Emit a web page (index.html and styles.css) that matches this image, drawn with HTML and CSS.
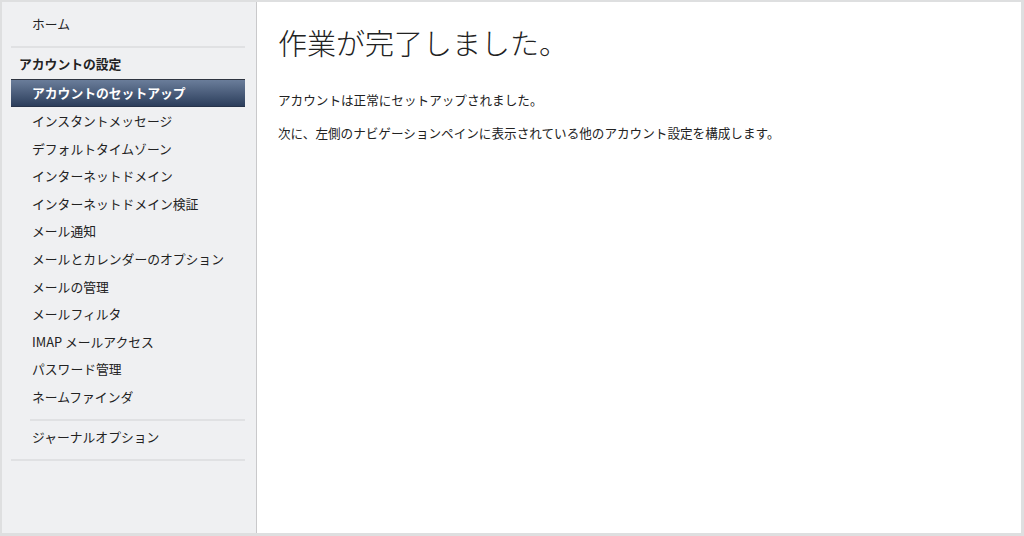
FILE: index.html
```html
<!DOCTYPE html>
<html lang="ja">
<head>
    <meta charset="UTF-8">
    <meta name="viewport" content="width=device-width, initial-scale=1.0">
    <title>アカウントのセットアップ</title>
    <link rel="stylesheet" href="styles.css">
</head>
<body>
    <div class="frame">
        <nav class="sidebar">
            <div class="nav-item">ホーム</div>
            <div class="sep"></div>
            <div class="nav-heading">アカウントの設定</div>
            <div class="nav-item selected">アカウントのセットアップ</div>
            <div class="nav-item">インスタントメッセージ</div>
            <div class="nav-item">デフォルトタイムゾーン</div>
            <div class="nav-item">インターネットドメイン</div>
            <div class="nav-item">インターネットドメイン検証</div>
            <div class="nav-item">メール通知</div>
            <div class="nav-item">メールとカレンダーのオプション</div>
            <div class="nav-item">メールの管理</div>
            <div class="nav-item">メールフィルタ</div>
            <div class="nav-item">IMAP メールアクセス</div>
            <div class="nav-item">パスワード管理</div>
            <div class="nav-item">ネームファインダ</div>
            <div class="sep sep-inset"></div>
            <div class="nav-item journal">ジャーナルオプション</div>
            <div class="sep"></div>
        </nav>
        <main class="content">
            <h1>作業が完了しました。</h1>
            <p>アカウントは正常にセットアップされました。</p>
            <p>次に、左側のナビゲーションペインに表示されている他のアカウント設定を構成します。</p>
        </main>
    </div>
</body>
</html>
```

FILE: styles.css
```css
html, body {
    margin: 0;
    padding: 0;
}
body {
    font-family: "Noto Sans CJK JP", "Noto Sans", sans-serif;
    color: #222;
    background: #fff;
}
.frame {
    display: flex;
    width: 1024px;
    height: 536px;
    box-sizing: border-box;
    border: 2px solid #dedfe0;
    border-bottom-width: 3px;
    border-right-width: 3px;
}
.sidebar {
    width: 255px;
    flex-shrink: 0;
    background: #eff0f2;
    border-right: 1px solid #c9c9cb;
    padding: 8px 11px 0 9px;
    box-sizing: border-box;
    font-size: 12.8px;
}
.nav-item {
    height: 27.6px;
    line-height: 27.6px;
    padding-left: 21px;
    white-space: nowrap;
}
.nav-item:first-child {
    height: 28px;
    line-height: 28px;
}
.sep {
    height: 2px;
    background: #e0e1e3;
    margin-top: 8px;
}
.sep-inset {
    margin-left: 19px;
}
.nav-heading {
    height: 28px;
    line-height: 28px;
    margin-top: 2px;
    padding-left: 8px;
    font-weight: bold;
}
.nav-item.selected {
    height: 28px;
    line-height: 26px;
    margin-top: 1px;
    box-sizing: border-box;
    color: #fff;
    font-weight: bold;
    background: linear-gradient(#6a7d9a, #2c3e5c);
    border-top: 1px solid #2e3440;
    border-bottom: 1px solid #27334a;
}
.nav-item.journal {
    height: 28px;
    line-height: 28px;
    margin-top: 2px;
}
.content {
    flex: 1;
    padding: 20px 21px;
}
.content h1 {
    margin: 0 0 29px;
    font-size: 29px;
    font-weight: 300;
    line-height: 40px;
}
.content p {
    margin: 0 0 16px;
    font-size: 12.6px;
    line-height: 17px;
}
```
